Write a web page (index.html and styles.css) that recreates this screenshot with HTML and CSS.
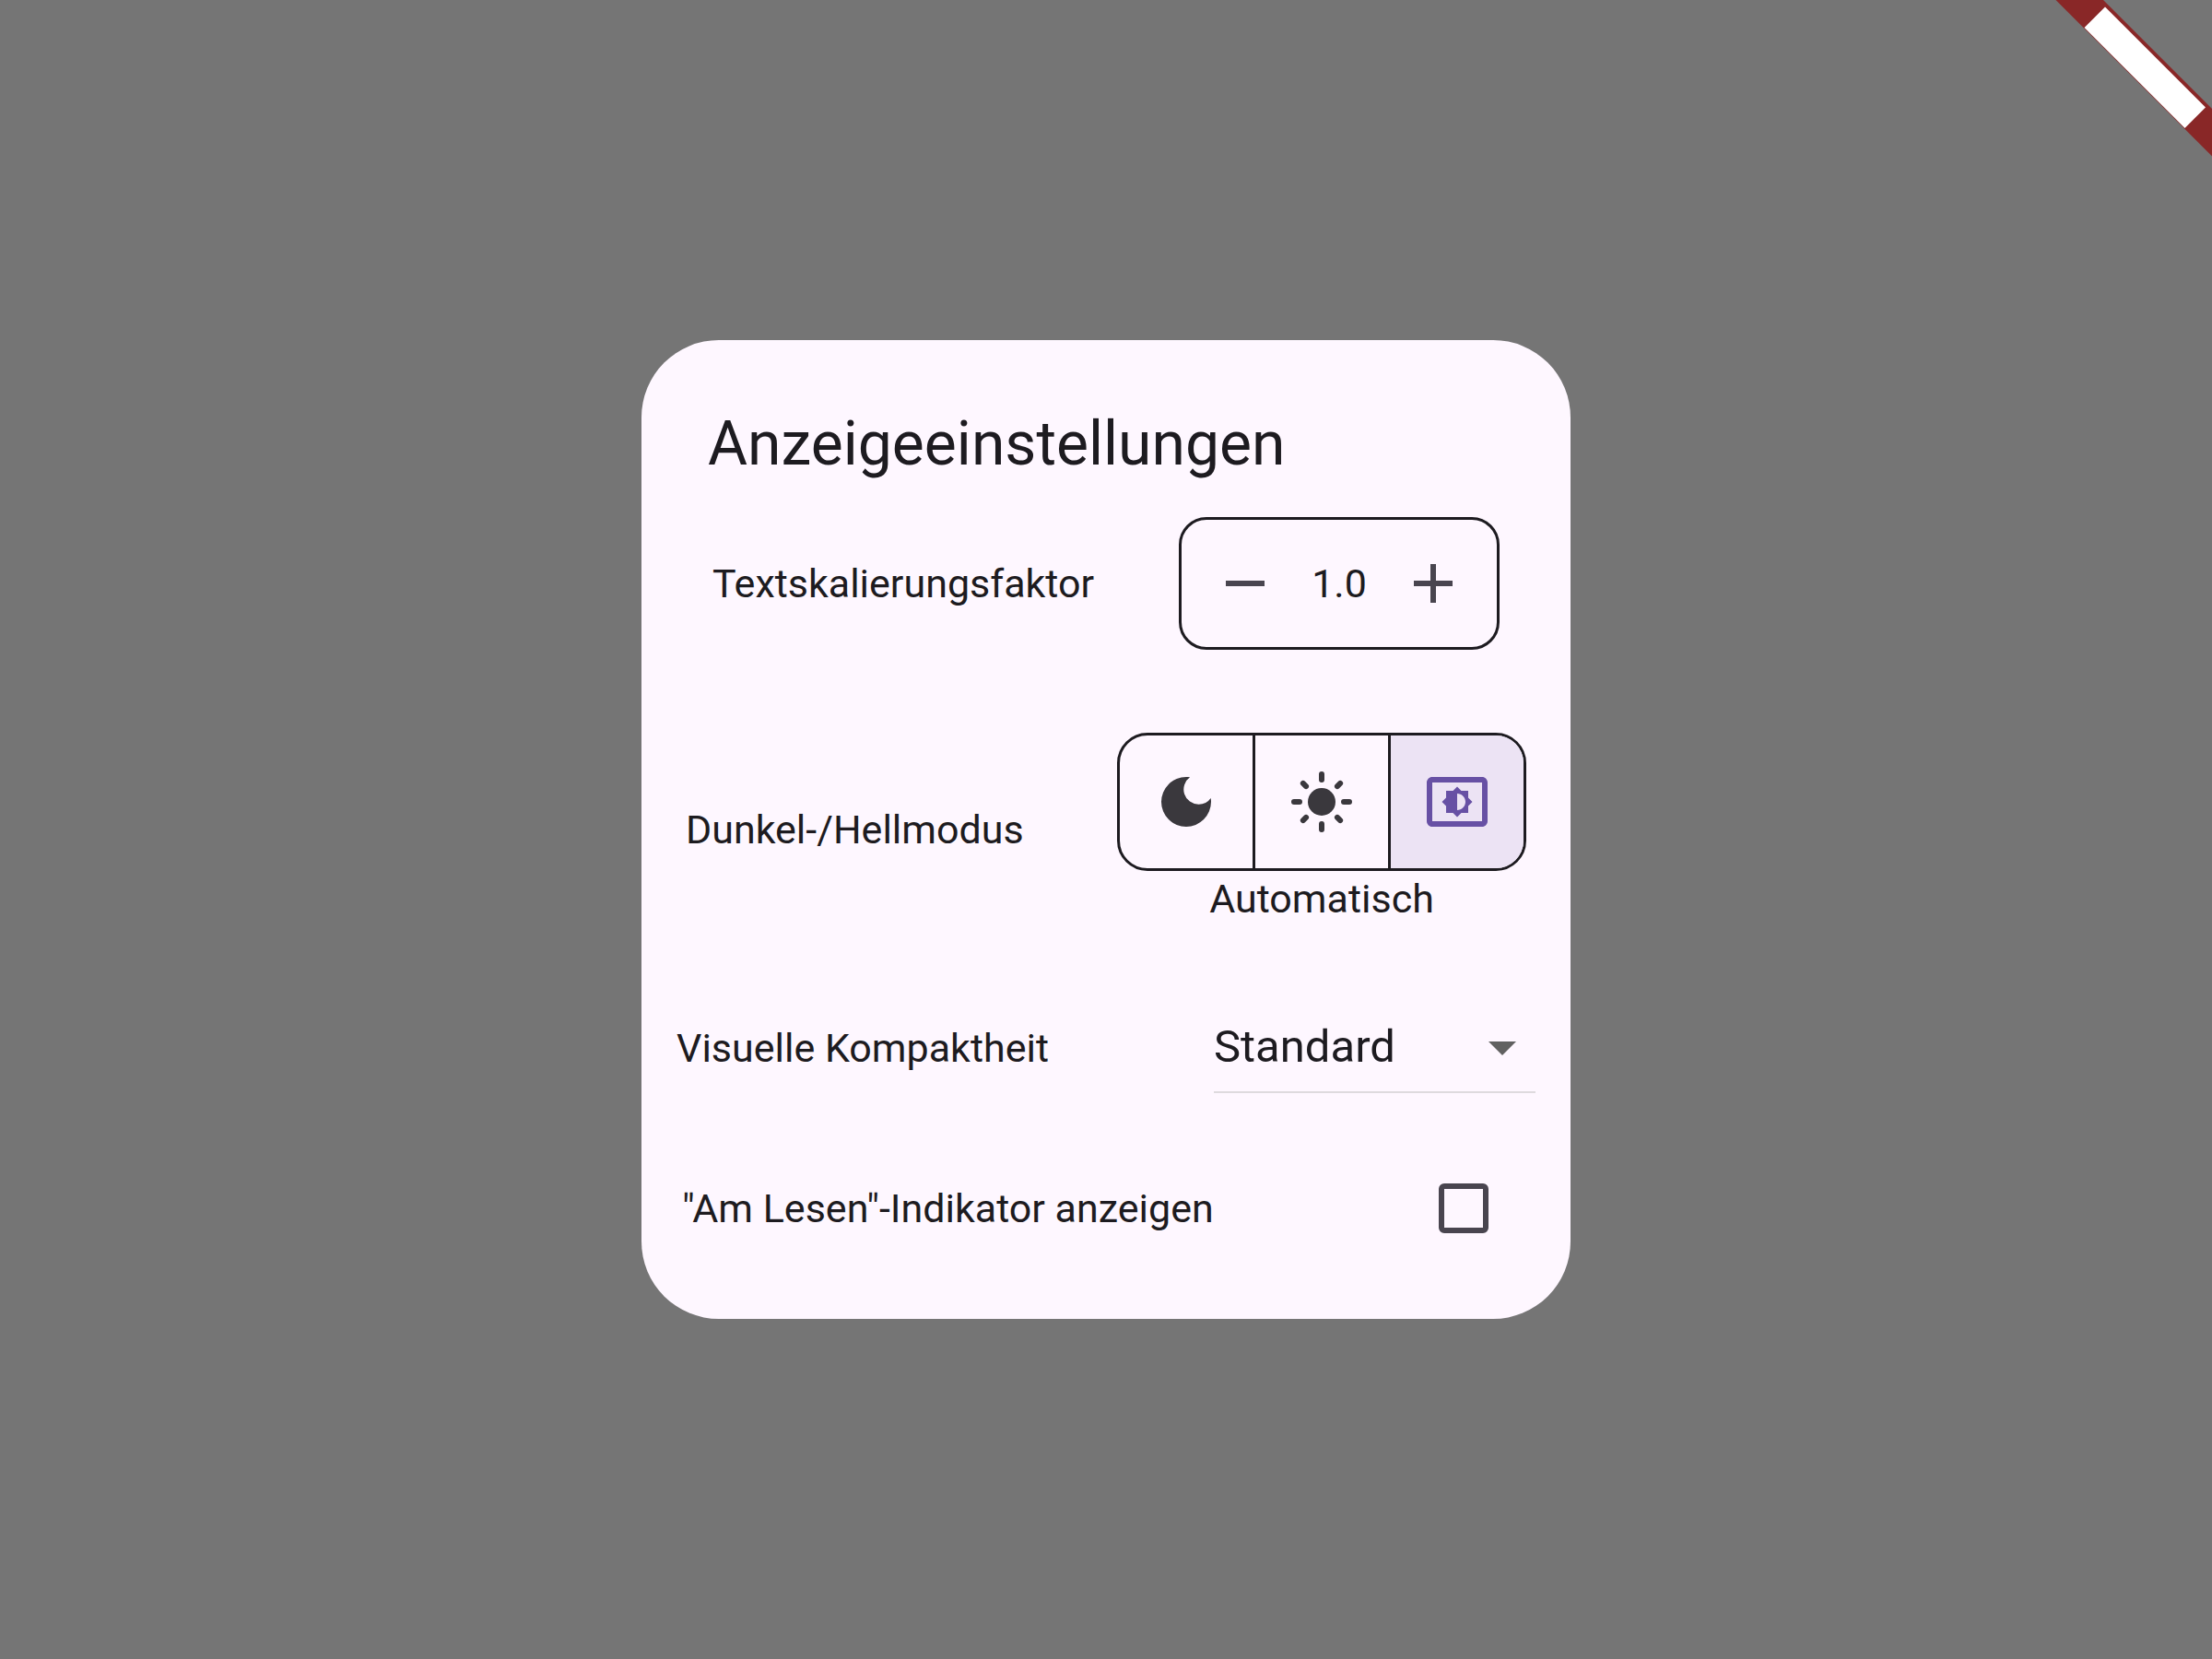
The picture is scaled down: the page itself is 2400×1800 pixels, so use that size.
FILE: index.html
```html
<!DOCTYPE html>
<html lang="de">
<head>
<meta charset="utf-8">
<meta name="viewport" content="width=device-width, initial-scale=1">
<title>Anzeigeeinstellungen</title>
<link rel="stylesheet" href="styles.css">
</head>
<body>
<svg class="ribbon" viewBox="0 0 200 200" aria-hidden="true">
  <path fill="#892727" d="M30.500 0H82L200 118v51.500z"/>
  <path fill="#fff" d="M84 7.500 193 116.500 170.500 139 61.500 30z"/>
</svg>
<main class="dialog" role="dialog" aria-labelledby="title">
  <h1 class="title" id="title">Anzeigeeinstellungen</h1>
  <div class="rows">
    <div class="row row-scale">
      <span class="label" id="scale-label">Textskalierungsfaktor</span>
      <div class="stepper" role="group" aria-labelledby="scale-label">
        <button class="step" type="button" aria-label="Verkleinern">
          <svg class="icon" viewBox="0 0 24 24"><path d="M19 13H5v-2h14z"/></svg>
        </button>
        <output class="value">1.0</output>
        <button class="step" type="button" aria-label="Vergrößern">
          <svg class="icon" viewBox="0 0 24 24"><path d="M19 13h-6v6h-2v-6H5v-2h6V5h2v6h6z"/></svg>
        </button>
      </div>
    </div>
    <div class="row row-mode">
      <span class="label" id="mode-label">Dunkel-/Hellmodus</span>
      <div class="mode">
        <div class="toggle" role="group" aria-labelledby="mode-label">
          <button class="option" type="button" aria-label="Dunkel" aria-pressed="false">
            <svg class="icon" viewBox="0 0 24 24"><path d="M12 3a9 9 0 1 0 9 9c0-.46-.04-.92-.1-1.36a5.389 5.389 0 0 1-4.400 2.260 5.403 5.403 0 0 1-3.140-9.800c-.44-.06-.9-.1-1.360-.1z"/></svg>
          </button>
          <button class="option" type="button" aria-label="Hell" aria-pressed="false">
            <svg class="icon" viewBox="0 0 24 24"><circle cx="12" cy="12" r="5"/><path fill="none" stroke="currentColor" stroke-width="2" stroke-linecap="round" d="M2 12h2M20 12h2M12 2v2M12 20v2M5.290 5.290l1.060 1.060M17.650 17.650l1.060 1.060M18.710 5.290l-1.060 1.060M6.350 17.650l-1.060 1.060"/></svg>
          </button>
          <button class="option option-selected" type="button" aria-label="Automatisch" aria-pressed="true">
            <svg class="icon" viewBox="0 0 24 24"><path d="M21 3H3c-1.100 0-2 .9-2 2v14c0 1.100.9 2 2 2h18c1.100 0 2-.9 2-2V5c0-1.100-.9-2-2-2zm0 16.010H3V4.990h18v14.020zM8 16h2.500l1.500 1.500 1.500-1.500H16v-2.500l1.500-1.500-1.500-1.500V8h-2.500L12 6.500 10.500 8H8v2.500L6.500 12 8 13.500V16zm4-7c1.660 0 3 1.340 3 3s-1.340 3-3 3V9z"/></svg>
          </button>
        </div>
        <span class="label">Automatisch</span>
      </div>
    </div>
    <div class="row row-density">
      <label class="label" for="density">Visuelle Kompaktheit</label>
      <div class="dropdown">
        <select class="select" id="density">
          <option>Standard</option>
        </select>
        <svg class="icon arrow" viewBox="0 0 24 24" aria-hidden="true"><path d="M7 10l5 5 5-5z"/></svg>
      </div>
    </div>
    <div class="row row-reading">
      <label class="label" for="reading">"Am Lesen"-Indikator anzeigen</label>
      <input class="checkbox" type="checkbox" id="reading">
    </div>
  </div>
</main>
</body>
</html>
```
FILE: styles.css
```css
*,
*::before,
*::after {
  box-sizing: border-box;
}

body {
  margin: 0;
  min-height: 100vh;
  display: grid;
  place-items: center;
  background: #757575;
  color: #1d1b20;
  font-family: Roboto, "Liberation Sans", sans-serif;
  font-size: 43px;
  line-height: 60px;
}

button,
select {
  margin: 0;
  padding: 0;
  border: 0;
  background: none;
  font: inherit;
  color: inherit;
}

.ribbon {
  position: absolute;
  top: 0;
  right: 0;
  width: 200px;
  height: 200px;
}

.dialog {
  width: 100%;
  max-width: 1008px;
  padding: 72px 0 48px;
  border-radius: 84px;
  background: #fef7ff;
}

.title {
  margin: 0 0 38px;
  padding: 0 72px;
  font-size: 66px;
  font-weight: 400;
  line-height: 82px;
}

.row {
  display: flex;
  align-items: center;
  justify-content: space-between;
  min-height: 144px;
}

.row-scale {
  padding: 0 77px;
  margin-bottom: 90px;
}

.row-mode {
  padding: 0 48px;
  margin-bottom: 60px;
}

.row-density {
  padding: 0 38px;
  margin-bottom: 30px;
}

.row-reading {
  padding: 0 44px;
}

.label {
  white-space: nowrap;
}

.icon {
  display: block;
  width: 72px;
  height: 72px;
  fill: currentColor;
}

.stepper {
  display: flex;
  align-items: center;
  width: 348px;
  height: 144px;
  border: 3px solid #1d1b20;
  border-radius: 30px;
}

.step {
  display: grid;
  place-items: center;
  width: 138px;
  height: 138px;
  color: #49454f;
}

.value {
  flex: 1;
  text-align: center;
}

.mode {
  display: flex;
  flex-direction: column;
  align-items: center;
}

.toggle {
  display: flex;
  border: 3px solid #1d1b20;
  border-radius: 33px;
  overflow: hidden;
}

.option {
  display: grid;
  place-items: center;
  width: 144px;
  height: 144px;
  color: #3a383d;
}

.option + .option {
  width: 147px;
  border-left: 3px solid #1d1b20;
}

.option-selected {
  background: #ece3f4;
  color: #6750a4;
}

.dropdown {
  display: grid;
  align-items: center;
  width: 349px;
  height: 98px;
  border-bottom: 2px solid #dedade;
}

.select,
.arrow {
  grid-area: 1 / 1;
}

.select {
  appearance: none;
  width: 100%;
  font-size: 49px;
  line-height: 72px;
}

.arrow {
  justify-self: end;
  color: #616161;
  pointer-events: none;
}

.checkbox {
  appearance: none;
  width: 54px;
  height: 54px;
  margin: 45px;
  border: 6px solid #49454f;
  border-radius: 6px;
}
```
